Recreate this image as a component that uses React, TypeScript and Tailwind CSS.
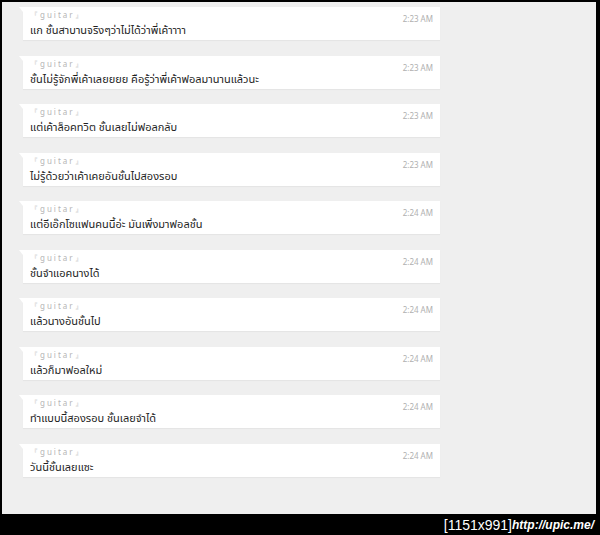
const messages = [
  { text: "แก ชั้นสาบานจริงๆว่าไม่ได้ว่าพี่เค้าาาา", time: "2:23 AM" },
  { text: "ชั้นไม่รู้จักพี่เค้าเลยยยย คือรู้ว่าพี่เค้าฟอลมานานแล้วนะ", time: "2:23 AM" },
  { text: "แต่เค้าล็อคทวิต ชั้นเลยไม่ฟอลกลับ", time: "2:23 AM" },
  { text: "ไม่รู้ด้วยว่าเค้าเคยอันชั้นไปสองรอบ", time: "2:23 AM" },
  { text: "แต่อีเอ๊กโซแฟนคนนี้อ่ะ มันเพิ่งมาฟอลชั้น", time: "2:24 AM" },
  { text: "ชั้นจำแอคนางได้", time: "2:24 AM" },
  { text: "แล้วนางอันชั้นไป", time: "2:24 AM" },
  { text: "แล้วก็มาฟอลใหม่", time: "2:24 AM" },
  { text: "ทำแบบนี้สองรอบ ชั้นเลยจำได้", time: "2:24 AM" },
  { text: "วันนี้ชั้นเลยแซะ", time: "2:24 AM" },
];

function Bubble({ text, time }: { text: string; time: string }) {
  return (
    <div className="relative ml-[21px] w-[417px] h-[33px] bg-white shadow-[0_1px_1px_rgba(0,0,0,0.04)]">
      {/* little tail */}
      <div className="absolute -left-[4px] top-0 w-0 h-0 border-t-[5px] border-t-white border-l-[4px] border-l-transparent" />
      <div className="absolute left-[7px] top-[3px] text-[8px] leading-[10px] tracking-[2px] text-[#b5b5b5]">
        『guitar』
      </div>
      <div className="absolute right-[7px] top-[7px] text-[8px] leading-[10px] text-[#b0b0b0]">{time}</div>
      <div className="absolute left-[7px] top-[15px] text-[11px] leading-[15px] text-[#1e1e1e]">{text}</div>
    </div>
  );
}

export default function App() {
  return (
    <div className="w-[600px] h-[535px] bg-black flex flex-col" style={{ fontFamily: '"Noto Sans", "Noto Sans Thai", "DejaVu Sans", sans-serif' }}>
      <div className="ml-[2px] mt-[2px] w-[594px] h-[512px] bg-[#efefef] flex flex-col gap-[15.5px] pt-[5px]">
        {messages.map((m, i) => (
          <Bubble key={i} text={m.text} time={m.time} />
        ))}
      </div>
      <div className="flex-1 flex items-center justify-end pr-[6px] text-white leading-none">
        <span className="text-[14px]" style={{ fontFamily: '"Liberation Sans", sans-serif' }}>[1151x991]</span>
        <span className="text-[12px] font-bold italic" style={{ fontFamily: '"Liberation Sans", sans-serif' }}>http://upic.me/</span>
      </div>
    </div>
  );
}
